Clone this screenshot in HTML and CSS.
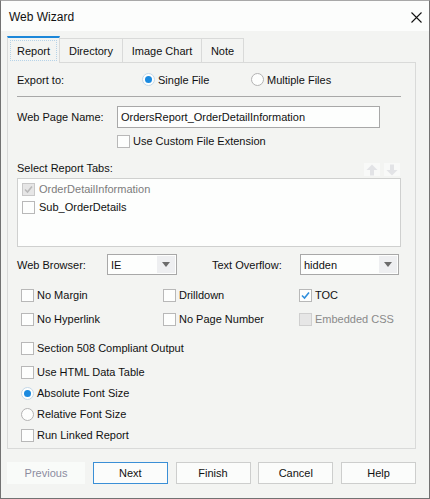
FILE: index.html
```
<!DOCTYPE html>
<html lang="en">
<head>
    <meta charset="UTF-8">
    <title>Web Wizard</title>
    <link rel="stylesheet" href="styles.css">
</head>
<body>
    <div class="window">
        <div class="titlebar">
            <span class="title">Web Wizard</span>
            <svg class="close" width="11" height="11" viewBox="0 0 11 11">
                <path d="M0.5 0.5 L10.5 10.5 M10.5 0.5 L0.5 10.5" stroke="#111" stroke-width="1.1" fill="none"/>
            </svg>
        </div>

        <div class="content">
            <div class="tabs">
                <div class="tab active"><span class="focus">Report</span></div>
                <div class="tab tab-dir">Directory</div>
                <div class="tab tab-img">Image Chart</div>
                <div class="tab tab-note">Note</div>
            </div>

            <div class="panel">
                <div class="row export-row">
                    <span class="export-label">Export to:</span>
                    <label class="opt"><span class="radio checked"></span>Single File</label>
                    <label class="opt"><span class="radio"></span>Multiple Files</label>
                </div>

                <div class="separator"></div>

                <div class="row name-row">
                    <span class="name-label">Web Page Name:</span>
                    <div class="textbox">OrdersReport_OrderDetailInformation</div>
                </div>

                <div class="row check ext-row">
                    <span class="box"></span>Use Custom File Extension
                </div>

                <div class="row tabs-head">
                    <span>Select Report Tabs:</span>
                    <div class="arrows">
                        <span class="arrow-btn">
                            <svg width="12" height="12" viewBox="0 0 12 12"><path d="M6 0.5 L11.5 6 L8 6 L8 11.5 L4 11.5 L4 6 L0.5 6 Z" fill="#e2e3e6"/></svg>
                        </span>
                        <span class="arrow-btn">
                            <svg width="12" height="12" viewBox="0 0 12 12"><path d="M6 11.5 L11.5 6 L8 6 L8 0.5 L4 0.5 L4 6 L0.5 6 Z" fill="#e2e3e6"/></svg>
                        </span>
                    </div>
                </div>

                <div class="listbox">
                    <div class="list-item disabled"><span class="box checked"><svg width="11" height="11" viewBox="0 0 11 11"><path d="M2 5.5 L4.5 8 L9 2.5" stroke="#b9b9b9" stroke-width="1.6" fill="none"/></svg></span>OrderDetailInformation</div>
                    <div class="list-item"><span class="box"></span>Sub_OrderDetails</div>
                </div>

                <div class="row select-row">
                    <span class="browser-label">Web Browser:</span>
                    <div class="select select-ie">
                        <span class="select-text">IE</span>
                        <span class="select-btn"><span class="tri"></span></span>
                    </div>
                    <span class="overflow-label">Text Overflow:</span>
                    <div class="select select-overflow">
                        <span class="select-text">hidden</span>
                        <span class="select-btn"><span class="tri"></span></span>
                    </div>
                </div>

                <div class="check-grid">
                    <div class="check"><span class="box"></span>No Margin</div>
                    <div class="check"><span class="box"></span>Drilldown</div>
                    <div class="check"><span class="box"><svg width="11" height="11" viewBox="0 0 11 11"><path d="M2 5.5 L4.5 8 L9 2.5" stroke="#2f8fdc" stroke-width="1.6" fill="none"/></svg></span>TOC</div>
                    <div class="check"><span class="box"></span>No Hyperlink</div>
                    <div class="check"><span class="box"></span>No Page Number</div>
                    <div class="check disabled"><span class="box"></span>Embedded CSS</div>
                </div>

                <div class="row check opt-508"><span class="box"></span>Section 508 Compliant Output</div>
                <div class="row check opt-table"><span class="box"></span>Use HTML Data Table</div>
                <div class="row check opt-font"><span class="radio checked"></span>Absolute Font Size</div>
                <div class="row check opt-font"><span class="radio"></span>Relative Font Size</div>
                <div class="row check opt-font"><span class="box"></span>Run Linked Report</div>
            </div>

            <div class="buttons">
                <button class="btn disabled">Previous</button>
                <button class="btn default">Next</button>
                <button class="btn">Finish</button>
                <button class="btn">Cancel</button>
                <button class="btn">Help</button>
            </div>
        </div>
    </div>
</body>
</html>
```

FILE: styles.css
```
body {
    margin: 0;
    font-family: "Liberation Sans", Arial, sans-serif;
    font-size: 11px;
    color: #111;
}
.window {
    width: 430px;
    height: 499px;
    box-sizing: border-box;
    border: 1px solid #727272;
    border-top-color: #a8a8a8;
    background: #f3f4f2;
}
.titlebar {
    height: 30px;
    background: #fcfdfc;
    display: flex;
    align-items: center;
    justify-content: space-between;
    padding: 0 7px 0 8px;
}
.title {
    font-size: 12px;
    margin-top: 1px;
}
.close {
    margin-top: 2px;
}
.content {
    padding: 5px 13px 0 6px;
}
.tabs {
    display: flex;
    align-items: flex-end;
    height: 26px;
}
.tab {
    height: 24px;
    box-sizing: border-box;
    border: 1px solid #d9dad9;
    border-bottom: none;
    border-left: none;
    display: flex;
    align-items: center;
    justify-content: center;
    padding-top: 1px;
}
.tab.active {
    width: 53px;
    height: 27px;
    border-left: 1px solid #d9dad9;
    border-top: 2px solid #1c87d9;
    margin-bottom: -1px;
    background: #f3f4f2;
    position: relative;
    z-index: 1;
    padding: 2px 2px 0;
    align-items: stretch;
}
.focus {
    flex: 1;
    display: flex;
    align-items: center;
    justify-content: center;
    border: 1px dotted #b6d3e8;
    margin-bottom: 2px;
}
.tab-dir { width: 63px; }
.tab-img { width: 79px; }
.tab-note { width: 42px; }

.panel {
    height: 387px;
    box-sizing: border-box;
    border: 1px solid #d9dad9;
    padding: 6px 14px 0 9px;
}
.row {
    display: flex;
    align-items: center;
}
.export-row {
    height: 21px;
}
.export-label {
    width: 125px;
}
.opt {
    width: 109px;
    display: flex;
    align-items: center;
    gap: 3px;
}
.radio {
    width: 13px;
    height: 13px;
    box-sizing: border-box;
    border: 1px solid #b3b3b3;
    border-radius: 50%;
    background: #fdfefd;
    display: inline-flex;
    align-items: center;
    justify-content: center;
}
.radio.checked {
    border-color: #c4d8e8;
}
.radio.checked::after {
    content: "";
    width: 7px;
    height: 7px;
    border-radius: 50%;
    background: #1a8ae0;
}
.separator {
    margin-top: 6px;
    height: 1px;
    background: #a8a8a8;
}
.name-row {
    margin-top: 9px;
    height: 22px;
}
.name-label {
    width: 100px;
}
.textbox {
    width: 263px;
    height: 22px;
    box-sizing: border-box;
    border: 1px solid #a8a8a8;
    background: #fdfefd;
    padding-left: 3px;
    display: flex;
    align-items: center;
}
.check {
    display: flex;
    align-items: center;
    gap: 3px;
    height: 18px;
}
.box {
    width: 13px;
    height: 13px;
    box-sizing: border-box;
    border: 1px solid #b8b8b8;
    background: #fdfefd;
    display: inline-flex;
    align-items: center;
    justify-content: center;
    flex-shrink: 0;
}
.ext-row {
    margin-top: 6px;
    height: 14px;
    padding-left: 100px;
}
.tabs-head {
    margin-top: 12px;
    height: 16px;
    justify-content: space-between;
}
.arrows {
    display: flex;
    gap: 4px;
    margin-right: 1px;
    margin-top: 3px;
}
.arrow-btn {
    width: 16px;
    height: 13px;
    background: #f8f9f8;
    display: flex;
    align-items: center;
    justify-content: center;
}
.listbox {
    margin-top: 2px;
    height: 69px;
    box-sizing: border-box;
    border: 1px solid #cfd0cf;
    background: #fdfefd;
    padding: 1px 0 0 4px;
}
.list-item {
    height: 18px;
    display: flex;
    align-items: center;
    gap: 4px;
}
.list-item.disabled {
    color: #7c7c7c;
}
.list-item.disabled .box {
    background: #e6e6e6;
    border-color: #c8c8c8;
}
.select-row {
    margin-top: 7px;
    height: 21px;
}
.browser-label {
    width: 90px;
}
.overflow-label {
    width: 88px;
    margin-left: 35px;
}
.select {
    height: 21px;
    box-sizing: border-box;
    border: 1px solid #a8a8a8;
    background: #fdfefd;
    display: flex;
    align-items: center;
    justify-content: space-between;
    padding: 1px 1px 1px 3px;
}
.select-ie { width: 70px; }
.select-overflow { width: 99px; }
.select-btn {
    width: 18px;
    height: 17px;
    background: #eeeff1;
    display: flex;
    align-items: center;
    justify-content: center;
}
.tri {
    width: 0;
    height: 0;
    border-left: 4px solid transparent;
    border-right: 4px solid transparent;
    border-top: 5px solid #6c6c6c;
}
.check-grid {
    margin-top: 11px;
    padding-left: 4px;
    display: grid;
    grid-template-columns: 142px 136px 1fr;
    row-gap: 6px;
}
.check.disabled {
    color: #8a8a8a;
}
.check.disabled .box {
    background: #e6e6e6;
    border-color: #cfcfcf;
}
.opt-508, .opt-table, .opt-font {
    padding-left: 4px;
}
.opt-508 { margin-top: 11px; }
.opt-table { margin-top: 6px; }
.opt-font { margin-top: 3px; }

.buttons {
    margin-top: 13px;
    display: flex;
    justify-content: space-between;
}
.btn {
    width: 75px;
    height: 22px;
    box-sizing: border-box;
    border: 1px solid #cdcecd;
    background: #fbfcfb;
    font-family: inherit;
    font-size: 11px;
    color: #111;
    padding: 0;
}
.btn.disabled {
    width: 78px;
    border-color: #f9fbf9;
    background: #f9fbf9;
    color: #8c8ca0;
}
.btn.default {
    border-color: #3a8fd6;
}
```
